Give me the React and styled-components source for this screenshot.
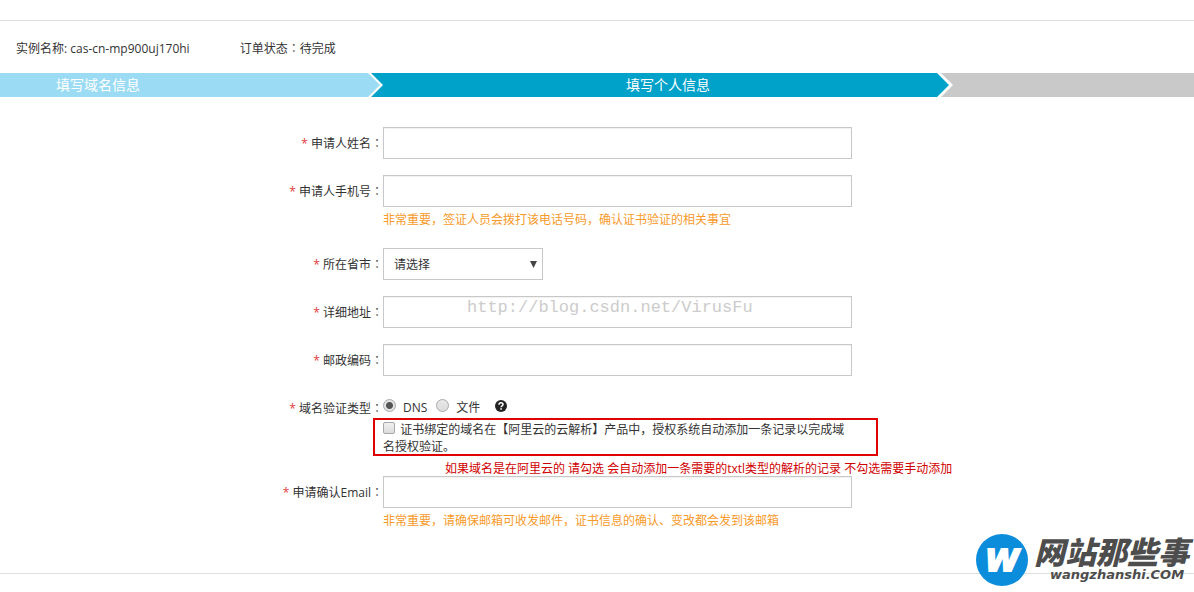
import React from 'react';
import styled, { createGlobalStyle, css } from 'styled-components';

const GlobalStyle = createGlobalStyle`
  *, *::before, *::after { box-sizing: border-box; }
  body {
    margin: 0;
    background: #fff;
    color: #333;
    font: 12px/18px "Open Sans", "Noto Sans CJK SC", sans-serif;
  }
  input, select { font: inherit; color: inherit; margin: 0; }
`;

const Page = styled.div`
  position: relative;
  padding: 20px 0 18px;
  overflow: hidden;
`;

const Panel = styled.main`
  border-top: 1px solid #ddd;
  border-bottom: 1px solid #ddd;
  padding-bottom: 40px;
`;

const OrderInfo = styled.div`
  display: flex;
  gap: 50px;
  padding: 19px 16px 15px;
`;

const Colon = styled.span`
  font-family: "Noto Sans CJK TC", sans-serif;
  line-height: 1px;
  color: #555;
`;

const Steps = styled.ol`
  display: grid;
  grid-template-columns: minmax(0, 380fr) minmax(0, 569fr) minmax(0, 245fr);
  margin: 0;
  padding: 0;
  list-style: none;
  height: 24px;
`;

const stepLook = {
  done: css`
    padding-left: 56px;
    background: #9bdcf4;
    clip-path: polygon(0 0, calc(100% - 12px) 0, 100% 50%, calc(100% - 12px) 100%, 0 100%);
  `,
  current: css`
    margin-left: -9px;
    padding-left: 16px;
    text-align: center;
    background: #00a2ca;
    clip-path: polygon(0 0, calc(100% - 12px) 0, 100% 50%, calc(100% - 12px) 100%, 0 100%, 12px 50%);
  `,
  next: css`
    margin-left: -8px;
    background: #c9c9c9;
    clip-path: polygon(0 0, 100% 0, 100% 100%, 0 100%, 12px 50%);
  `,
};

const Step = styled.li`
  color: #fff;
  font-size: 14px;
  line-height: 24px;
  ${(p) => stepLook[p.$state]}
`;

const Form = styled.form`
  padding-top: 30px;
`;

const Row = styled.div`
  display: grid;
  grid-template-columns: minmax(110px, 383fr) minmax(0, 469px) minmax(0, 342fr);
  margin-bottom: ${(p) => (p.$flush ? 0 : 16)}px;
`;

const Label = styled.label`
  height: 32px;
  text-align: right;
  line-height: 33px;
  white-space: nowrap;
`;

const Star = styled.span`
  color: #e4393c;
  margin-right: 3px;
`;

const Field = styled.div`
  position: relative;
  min-width: 0;
`;

const TextInput = styled.input`
  display: block;
  width: 100%;
  height: 32px;
  padding: 0 10px;
  border: 1px solid #c8c8c8;
  border-radius: 0;
  background: #fff;
  box-shadow: inset 0 1px 1px rgba(0, 0, 0, 0.06);
  outline: none;
`;

const Hint = styled.p`
  margin: 0;
  height: 25px;
  line-height: 26px;
  color: #f79a2b;
  white-space: nowrap;
`;

const SelectBox = styled.div`
  display: grid;
  width: 160px;
  align-items: center;
  > * { grid-area: 1 / 1; }
  svg { justify-self: end; margin-right: 6px; pointer-events: none; }
`;

const Select = styled.select`
  appearance: none;
  width: 100%;
  height: 32px;
  padding: 2px 24px 0 10px;
  border: 1px solid #c8c8c8;
  border-radius: 0;
  background: #fff;
`;

const Watermark = styled.span`
  position: absolute;
  left: 84px;
  top: 0;
  font: 17px/24px "Liberation Mono", monospace;
  color: #ccc;
  pointer-events: none;
`;

const Choices = styled.div`
  display: flex;
  align-items: center;
  height: 26px;
  padding-top: 2px;
  svg { margin-left: 15px; }
`;

const Choice = styled.label`
  display: flex;
  align-items: center;
  gap: 7px;
  margin-right: ${(p) => (p.$last ? 0 : 9)}px;
  line-height: 28px;
  padding-top: 4px;
`;

const Radio = styled.input`
  appearance: none;
  width: 13px;
  height: 13px;
  margin-bottom: 5px;
  border: 1px solid #a8a8a8;
  border-radius: 50%;
  background: linear-gradient(#e8e8e8, #dcdcdc);
  &:checked {
    background: radial-gradient(circle, #555 0 3px, #e4e4e4 4px);
  }
`;

const Highlight = styled.div`
  width: 505px;
  height: 38px;
  margin-left: -10px;
  padding: 1px 24px 0 8px;
  border: 2px solid #e00000;
  line-height: 17px;
`;

const Checkbox = styled.input`
  appearance: none;
  width: 12px;
  height: 12px;
  && { margin-right: 2px; }
  border: 1px solid #a8a8a8;
  border-radius: 2px;
  background: linear-gradient(#f0f0f0, #dcdcdc);
  &:checked { background: #555; }
`;

const Note = styled.p`
  margin: 0 0 0 62px;
  line-height: 20px;
  padding-top: 3px;
  height: 20px;
  color: #d00000;
  white-space: nowrap;
`;

const SiteLogo = styled.div`
  position: absolute;
  right: 5px;
  bottom: 5px;
  display: flex;
  align-items: center;
  gap: 5px;
  color: #4d4d4d;
`;

const LogoName = styled.div`
  font: italic 900 31px/26px "Noto Sans CJK SC", sans-serif;
`;

const LogoDomain = styled.div`
  padding: 4px 0 0 16px;
  font: italic bold 13px/14px "DejaVu Sans", sans-serif;
`;

function Required({ id, children }) {
  return (
    <Label htmlFor={id} as={id ? 'label' : 'span'}>
      <Star>*</Star>{children}<Colon>：</Colon>
    </Label>
  );
}

function TextRow({ id, label, hint, type = 'text', children }) {
  return (
    <Row $flush={id === 'email'}>
      <Required id={id}>{label}</Required>
      <Field>
        <TextInput id={id} type={type} />
        {children}
        {hint && <Hint>{hint}</Hint>}
      </Field>
    </Row>
  );
}

export default function App() {
  return (
    <Page>
      <GlobalStyle />
      <Panel>
        <OrderInfo>
          <span>实例名称: cas-cn-mp900uj170hi</span>
          <span>订单状态<Colon>：</Colon>待完成</span>
        </OrderInfo>
        <Steps>
          <Step $state="done">填写域名信息</Step>
          <Step $state="current">填写个人信息</Step>
          <Step $state="next" />
        </Steps>
        <Form>
          <TextRow id="name" label="申请人姓名" />
          <TextRow
            id="phone"
            type="tel"
            label="申请人手机号"
            hint="非常重要，签证人员会拨打该电话号码，确认证书验证的相关事宜"
          />
          <Row>
            <Required id="province">所在省市</Required>
            <SelectBox>
              <Select id="province">
                <option>请选择</option>
              </Select>
              <svg width="7" height="7" viewBox="0 0 7 7" aria-hidden="true">
                <path d="M0 0h7L3.500 7z" fill="#444" />
              </svg>
            </SelectBox>
          </Row>
          <TextRow id="address" label="详细地址">
            <Watermark>http://blog.csdn.net/VirusFu</Watermark>
          </TextRow>
          <TextRow id="postcode" label="邮政编码" />
          <Row $flush>
            <Required>域名验证类型</Required>
            <Field>
              <Choices role="radiogroup" aria-label="域名验证类型">
                <Choice><Radio type="radio" name="verify" defaultChecked />DNS</Choice>
                <Choice $last><Radio type="radio" name="verify" />文件</Choice>
                <svg width="12" height="12" viewBox="0 0 12 12" aria-hidden="true">
                  <circle cx="6" cy="6" r="6" fill="#222" />
                  <path d="M4 4.700C4 2.200 8 2.200 8 4.500C8 5.900 6.100 5.700 6.100 7.300" fill="none" stroke="#fff" strokeWidth="1.500" />
                  <rect x="5.300" y="8.200" width="1.600" height="1.500" fill="#fff" />
                </svg>
              </Choices>
              <Highlight>
                <Checkbox type="checkbox" id="auto-record" />{' '}
                <label htmlFor="auto-record">
                  证书绑定的域名在【阿里云的云解析】产品中，授权系统自动添加一条记录以完成域名授权验证。
                </label>
              </Highlight>
              <Note>如果域名是在阿里云的 请勾选 会自动添加一条需要的txtl类型的解析的记录 不勾选需要手动添加</Note>
            </Field>
          </Row>
          <TextRow
            id="email"
            type="email"
            label="申请确认Email"
            hint="非常重要，请确保邮箱可收发邮件，证书信息的确认、变改都会发到该邮箱"
          />
        </Form>
      </Panel>
      <SiteLogo>
        <svg width="54" height="54" viewBox="0 0 54 54" aria-hidden="true">
          <circle cx="27" cy="27" r="26" fill="#0c8ddb" />
          <text
            x="27"
            y="38"
            textAnchor="middle"
            fill="#fff"
            stroke="#fff"
            strokeWidth="2"
            fontFamily="DejaVu Sans"
            fontWeight="bold"
            fontStyle="italic"
            fontSize="31"
          >
            W
          </text>
        </svg>
        <div>
          <LogoName>网站那些事</LogoName>
          <LogoDomain>wangzhanshi.COM</LogoDomain>
        </div>
      </SiteLogo>
    </Page>
  );
}
